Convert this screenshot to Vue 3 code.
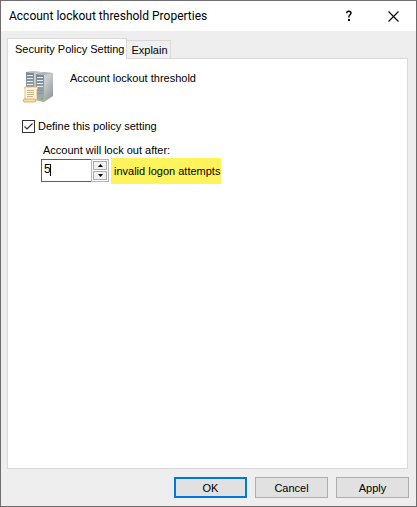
<template>
    <div class="dialog">
        <header class="titlebar">
            <h1 class="title">Account lockout threshold Properties</h1>
            <button class="titleButton" type="button" aria-label="Help">
                <svg width="8" height="12" viewBox="0 0 8 12">
                    <path d="M1.8 3.2V2.8Q1.8 1.2 3.8 1.2Q6 1.2 6 3Q6 4.2 4.8 5Q3.8 5.8 3.8 7.5" fill="none" stroke="#000" stroke-width="1.4" />
                    <rect x="3" y="9" width="2" height="2" />
                </svg>
            </button>
            <button class="titleButton" type="button" aria-label="Close">
                <svg width="11" height="11" viewBox="0 0 11 11">
                    <path d="M.5 .5L10.5 10.5M10.5 .5L.5 10.5" fill="none" stroke="#000" stroke-width="1.1" />
                </svg>
            </button>
        </header>

        <main class="body">
            <div class="tabs" role="tablist">
                <button
                    v-for="tab in tabs"
                    :key="tab"
                    class="tab"
                    :class="{ active: tab === activeTab }"
                    type="button"
                    role="tab"
                    :aria-selected="tab === activeTab"
                    @click="activeTab = tab"
                >{{ tab }}</button>
            </div>

            <section class="panel" role="tabpanel">
                <div class="policy">
                    <svg class="policyIcon" width="32" height="34" viewBox="0 0 32 34">
                        <defs>
                            <linearGradient id="side" x1="0" y1="0" x2="1" y2="1">
                                <stop offset="0" stop-color="#e6e8e9" />
                                <stop offset=".5" stop-color="#c3c7ca" />
                                <stop offset="1" stop-color="#858b8f" />
                            </linearGradient>
                            <linearGradient id="front" x1="0" y1="0" x2="0" y2="1">
                                <stop offset="0" stop-color="#79868f" />
                                <stop offset="1" stop-color="#a9b1b6" />
                            </linearGradient>
                        </defs>
                        <!-- back server -->
                        <path d="M4 1L11 0L19 1V25L12 27L4 25Z" fill="url(#side)" />
                        <path d="M4 1L12 2V27L4 25Z" fill="url(#front)" />
                        <path d="M4 1L11 0L19 1L12 2Z" fill="#b9bec1" />
                        <path d="M5 4.5H11M5 7.5H11M5 10.5H11M5 13.5H11" stroke="#e3edf1" />
                        <!-- front server -->
                        <path d="M14 3L21 1L31 2V25L22 31L14 29Z" fill="url(#side)" />
                        <path d="M14 3L22 4V31L14 29Z" fill="url(#front)" />
                        <path d="M14 3L21 1L31 2L22 4Z" fill="#aeb4b8" />
                        <path d="M15 6.5H21M15 9.5H21M15 12.5H21M15 15.5H21" stroke="#e3edf1" />
                        <path d="M15 19.5H21M15 22.5H21" stroke="#8b969e" />
                        <path d="M19 27h2v2h-2z" fill="#5ed315" />
                        <!-- scroll -->
                        <path d="M4 16H15Q17 17 15 18V29H3V18Q1 16 4 16Z" fill="#fff4cf" stroke="#d3ab67" stroke-width=".7" />
                        <path d="M5 19.5h7M5 21.5h7M5 23.5h7M5 25.5h6" stroke="#b7a47d" stroke-width=".8" />
                        <path d="M2 28H12Q14 28 14 30Q14 31 12 31H2Q0 30 2 28Z" fill="#f9dda3" stroke="#c9974d" stroke-width=".7" />
                    </svg>
                    <span class="policyName">Account lockout threshold</span>
                </div>

                <label class="define">
                    <input v-model="defined" class="checkbox" type="checkbox">
                    <span>Define this policy setting</span>
                </label>

                <div class="setting">
                    <label class="settingLabel" for="attempts">Account will lock out after:</label>
                    <div class="settingRow">
                        <div class="spinner">
                            <input id="attempts" v-model.number="attempts" class="number" type="text" :disabled="!defined">
                            <span class="caret"></span>
                            <div class="arrows">
                                <button class="arrow" type="button" aria-label="Increase" @click="step(1)">
                                    <svg width="5" height="3" viewBox="0 0 5 3"><path d="M0 3L2.5 0L5 3Z" /></svg>
                                </button>
                                <button class="arrow" type="button" aria-label="Decrease" @click="step(-1)">
                                    <svg width="5" height="3" viewBox="0 0 5 3"><path d="M0 0L2.5 3L5 0Z" /></svg>
                                </button>
                            </div>
                        </div>
                        <span class="unit">invalid logon attempts</span>
                    </div>
                </div>
            </section>

            <footer class="actions">
                <button class="action primary" type="button">OK</button>
                <button class="action" type="button">Cancel</button>
                <button class="action" type="button">Apply</button>
            </footer>
        </main>
    </div>
</template>

<script setup>
import { ref } from 'vue';

const tabs = ['Security Policy Setting', 'Explain'];
const activeTab = ref(tabs[0]);
const defined = ref(true);
const attempts = ref(5);

function step(amount) {
    attempts.value = Math.min(999, Math.max(0, attempts.value + amount));
}
</script>

<style>
body {
    margin: 0;
}
</style>

<style scoped>
.dialog {
    box-sizing: border-box;
    display: flex;
    flex-direction: column;
    min-height: 100vh;
    border: 1px solid #6f6d6e;
    background-color: #eeeeee;
    color: #000;
    font-family: "Liberation Sans", Arial, sans-serif;
    font-size: 11px;
    line-height: 14px;
}

button,
input {
    box-sizing: border-box;
    margin: 0;
    padding: 0;
    font: inherit;
    color: inherit;
}

svg {
    display: block;
}

/* title bar */
.titlebar {
    display: flex;
    align-items: center;
    height: 30px;
    padding-left: 8px;
    background-color: #fff;
}

.title {
    flex: 1;
    margin: 0;
    font-family: Roboto, sans-serif;
    font-size: 12px;
    font-weight: normal;
    white-space: nowrap;
}

.titleButton {
    display: flex;
    align-items: center;
    justify-content: center;
    width: 45px;
    height: 28px;
    border: none;
    background: none;
}

.body {
    display: flex;
    flex: 1;
    flex-direction: column;
    padding: 7px 7px 8px 6px;
}

/* the active tab covers the top border of the panel */
.tabs {
    display: flex;
    align-items: flex-end;
    height: 20px;
}

.tab {
    height: 18px;
    padding: 0 2px 0 4px;
    border: 1px solid #d9d9d9;
    border-bottom: none;
    border-left: none;
    background-color: #f0f0f0;
    white-space: nowrap;
}

.tab.active {
    z-index: 1;
    height: 21px;
    margin-bottom: -1px;
    padding: 0 2px 0 7px;
    border-left: 1px solid #d9d9d9;
    background-color: #fff;
}

.panel {
    flex: 1;
    margin-right: 1px;
    padding: 12px 14px;
    border: 1px solid #d9d9d9;
    background-color: #fff;
}

.policy {
    display: flex;
    gap: 16px;
}

.define {
    display: flex;
    align-items: center;
    gap: 3px;
    margin-top: 14px;
}

.checkbox {
    appearance: none;
    width: 13px;
    height: 13px;
    border: 1px solid #333;
    background-color: #fff;
}

.checkbox:checked {
    background-image: url("data:image/svg+xml,%3Csvg xmlns='http://www.w3.org/2000/svg' viewBox='0 0 11 11'%3E%3Cpath d='M1.5 5.5L4 8L9.5 2.5' fill='none' stroke='%23333' stroke-width='1.2'/%3E%3C/svg%3E");
}

.setting {
    margin-top: 10px;
    padding-left: 19px;
}

.settingLabel {
    display: block;
    padding-left: 2px;
}

.settingRow {
    display: flex;
    align-items: flex-start;
    gap: 2px;
    margin-top: 1px;
}

.spinner {
    position: relative;
    display: flex;
    width: 68px;
    height: 23px;
    margin-top: 1px;
}

.number {
    width: 50px;
    padding: 0 2px 3px;
    border: 1px solid #0078d7;
    border-right: none;
    outline: none;
    background-color: #fff;
    font-size: 12px;
}

/* text cursor */
.caret {
    position: absolute;
    top: 5px;
    left: 9px;
    width: 1px;
    height: 12px;
    background-color: #000;
}

.arrows {
    display: flex;
    flex: 1;
    flex-direction: column;
    gap: 1px;
    padding: 1px;
    border: 1px solid #b5b5b5;
    box-sizing: border-box;
}

.arrow {
    display: flex;
    flex: 1;
    align-items: center;
    justify-content: center;
    border: 1px solid #acacac;
    background-color: #f0f0f0;
}

.unit {
    padding: 6px 1px 6px 3px;
    background-color: #fff35c;
    white-space: nowrap;
}

/* dialog buttons */
.actions {
    display: flex;
    justify-content: flex-end;
    gap: 8px;
    margin-top: 8px;
}

.action {
    width: 73px;
    height: 21px;
    border: 1px solid #adadad;
    background-color: #e1e1e1;
}

.action.primary {
    border: 2px solid #0078d7;
}
</style>
